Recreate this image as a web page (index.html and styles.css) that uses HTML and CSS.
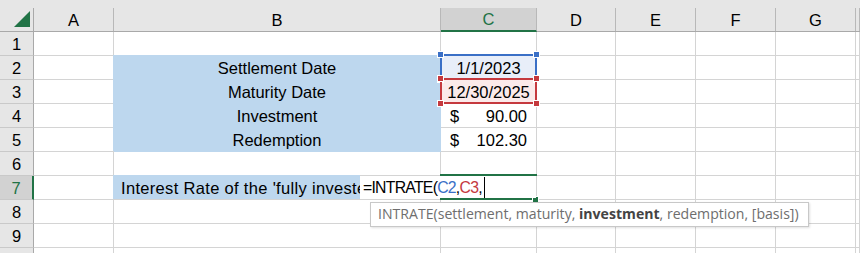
FILE: index.html
```html
<!DOCTYPE html>
<html>
<head>
<meta charset="utf-8">
<link rel="stylesheet" href="styles.css">
</head>
<body>
<div class="sheet">
  <div class="row head">
    <div class="hc w0 corner"><span class="lbl"><svg width="33" height="23" viewBox="0 8 33 23"><polygon points="14,27 30,27 30,11" fill="#217346"/></svg></span></div>
    <div class="hc wa"><span class="lbl">A</span></div>
    <div class="hc wb"><span class="lbl">B</span></div>
    <div class="hc wc sel"><span class="lbl">C</span></div>
    <div class="hc wd"><span class="lbl">D</span></div>
    <div class="hc we"><span class="lbl">E</span></div>
    <div class="hc wf"><span class="lbl">F</span></div>
    <div class="hc wg"><span class="lbl">G</span></div>
    <div class="hc wh"><span class="lbl"></span></div>
  </div>

  <div class="row">
    <div class="rh">1</div><div class="c wa"></div><div class="c wb"></div><div class="c wc"></div><div class="c wd"></div><div class="c we"></div><div class="c wf"></div><div class="c wg"></div><div class="c wh"></div>
  </div>
  <div class="row">
    <div class="rh">2</div><div class="c wa"></div><div class="c wb fill center">Settlement Date</div>
    <div class="c wc center ref ref-blue">1/1/2023<span class="box"><i class="h tl"></i><i class="h tr"></i><i class="h bl"></i><i class="h br"></i></span></div>
    <div class="c wd"></div><div class="c we"></div><div class="c wf"></div><div class="c wg"></div><div class="c wh"></div>
  </div>
  <div class="row">
    <div class="rh">3</div><div class="c wa"></div><div class="c wb fill center">Maturity Date</div>
    <div class="c wc center ref ref-red">12/30/2025<span class="box"><i class="h tl"></i><i class="h tr"></i><i class="h bl"></i><i class="h br"></i></span></div>
    <div class="c wd"></div><div class="c we"></div><div class="c wf"></div><div class="c wg"></div><div class="c wh"></div>
  </div>
  <div class="row">
    <div class="rh">4</div><div class="c wa"></div><div class="c wb fill center">Investment</div>
    <div class="c wc acct"><span>$</span><span>90.00</span></div>
    <div class="c wd"></div><div class="c we"></div><div class="c wf"></div><div class="c wg"></div><div class="c wh"></div>
  </div>
  <div class="row">
    <div class="rh">5</div><div class="c wa"></div><div class="c wb fill center">Redemption</div>
    <div class="c wc acct"><span>$</span><span>102.30</span></div>
    <div class="c wd"></div><div class="c we"></div><div class="c wf"></div><div class="c wg"></div><div class="c wh"></div>
  </div>
  <div class="row">
    <div class="rh">6</div><div class="c wa"></div><div class="c wb"></div><div class="c wc"></div><div class="c wd"></div><div class="c we"></div><div class="c wf"></div><div class="c wg"></div><div class="c wh"></div>
  </div>
  <div class="row r7">
    <div class="rh sel">7</div><div class="c wa"></div>
    <div class="c wb split"><div class="fill7">Interest Rate of the 'fully investe</div></div>
    <div class="c wc active"><span class="abox"><i class="fh"></i></span></div>
    <div class="c wd"></div><div class="c we"></div><div class="c wf"></div><div class="c wg"></div><div class="c wh"></div>
    <div class="editor">=INTRATE(<span class="rb">C2</span>,<span class="rr">C3</span>,<span class="caret"></span></div>
  </div>
  <div class="row">
    <div class="rh">8</div><div class="c wa"></div><div class="c wb"></div><div class="c wc"></div><div class="c wd"></div><div class="c we"></div><div class="c wf"></div><div class="c wg"></div><div class="c wh"></div>
  </div>
  <div class="row">
    <div class="rh">9</div><div class="c wa"></div><div class="c wb"></div><div class="c wc"></div><div class="c wd"></div><div class="c we"></div><div class="c wf"></div><div class="c wg"></div><div class="c wh"></div>
  </div>
  <div class="row">
    <div class="rh"></div><div class="c wa"></div><div class="c wb"></div><div class="c wc"></div><div class="c wd"></div><div class="c we"></div><div class="c wf"></div><div class="c wg"></div><div class="c wh"></div>
  </div>

  <div class="tip">INTRATE(settlement, maturity, <b>investment</b>, redemption, [basis])</div>
</div>
</body>
</html>
```

FILE: styles.css
```css
html, body {
  margin: 0;
  padding: 0;
  background: #fff;
}
.sheet {
  position: relative;
  width: 860px;
  height: 253px;
  overflow: hidden;
  font-family: "Liberation Sans", Arial, sans-serif;
  font-size: 16.5px;
  color: #000;
}
.row {
  display: flex;
  height: 24px;
}
.row.head {
  height: 32px;
  background: #e6e6e6;
}
.w0 { width: 34px; }
.wa { width: 80px; }
.wb { width: 327px; }
.wc { width: 96px; }
.wd { width: 79px; }
.we { width: 80px; }
.wf { width: 80px; }
.wg { width: 80px; }
.wh { flex: 1; }

/* column headers */
.hc {
  flex-shrink: 0;
  box-sizing: border-box;
  height: 32px;
  padding-top: 8px;
  border-bottom: 1px solid #a9a9a9;
}
.hc.wh { flex: 1; }
.hc .lbl {
  display: block;
  box-sizing: border-box;
  height: 23px;
  line-height: 24px;
  text-align: center;
  border-right: 1px solid #b8b8b8;
}
.corner .lbl {
  border-right-color: #a9a9a9;
}
.corner svg { display: block; }
.hc.sel {
  border-bottom: none;
}
.hc.sel .lbl {
  height: 24px;
  line-height: 23px;
  background: #d2d2d2;
  color: #217346;
  border-bottom: 2px solid #217346;
}

/* row headers */
.rh {
  flex-shrink: 0;
  box-sizing: border-box;
  width: 34px;
  height: 24px;
  line-height: 24px;
  text-align: center;
  background: #e6e6e6;
  border-right: 1px solid #a9a9a9;
  border-bottom: 1px solid #c9c9c9;
}
.rh.sel {
  background: #d2d2d2;
  color: #217346;
  border-right: 2px solid #217346;
}

/* cells */
.c {
  flex-shrink: 0;
  box-sizing: border-box;
  height: 24px;
  line-height: 24px;
  border-right: 1px solid #d4d4d4;
  border-bottom: 1px solid #d4d4d4;
  white-space: nowrap;
  position: relative;
}
.c.wh { flex: 1; }
.center { text-align: center; }
.fill {
  background: #bdd7ee;
  border-color: #bdd7ee;
  box-shadow: -1px -1px 0 0 #bdd7ee;
}
.acct {
  display: flex;
  justify-content: space-between;
  padding: 0 9px 0 9px;
}
.split {
  display: flex;
}
.fill7 {
  width: 247px;
  margin-left: -1px;
  padding-left: 8px;
  box-sizing: border-box;
  height: 24px;
  margin-top: -1px;
  line-height: 25px;
  padding-top: 1px;
  background: #bdd7ee;
  overflow: hidden;
  letter-spacing: 0.32px;
}

/* range reference highlights */
.ref-blue { background: #e8eef9; }
.ref-red { background: #fbeaea; }
.box {
  position: absolute;
  left: -1px;
  top: -2px;
  width: 97px;
  height: 26px;
  box-sizing: border-box;
  border: 2px solid #3a6fc6;
  z-index: 2;
}
.ref-red .box { border-color: #c5393e; z-index: 3; }
.h {
  position: absolute;
  width: 5px;
  height: 5px;
  background: #3a6fc6;
  box-shadow: 0 0 0 1px #fff;
}
.ref-red .h { background: #c5393e; }
.h.tl { left: -4px; top: -4px; }
.h.tr { right: -4px; top: -4px; }
.h.bl { left: -4px; bottom: -4px; }
.h.br { right: -4px; bottom: -4px; }

/* active cell */
.abox {
  position: absolute;
  left: -1px;
  top: -2px;
  width: 97px;
  height: 26px;
  box-sizing: border-box;
  border-top: 2px solid #217346;
  border-bottom: 2px solid #217346;
  z-index: 2;
}
.fh {
  position: absolute;
  right: -1px;
  bottom: -4px;
  width: 5px;
  height: 5px;
  background: #217346;
  box-shadow: 0 0 0 1px #fff;
}
.r7 { position: relative; }
.editor {
  position: absolute;
  left: 361px;
  top: 0;
  width: 175px;
  height: 22px;
  line-height: 24px;
  padding-left: 2px;
  box-sizing: border-box;
  background: #fff;
  white-space: nowrap;
  font-size: 15.8px;
  letter-spacing: -0.75px;
  z-index: 4;
}
.rb { color: #3a6fc6; }
.rr { color: #c5393e; }
.caret {
  display: inline-block;
  width: 1px;
  height: 21px;
  background: #000;
  vertical-align: -5px;
  margin-left: 2px;
}

/* tooltip */
.tip {
  position: absolute;
  left: 370px;
  top: 202px;
  width: 439px;
  height: 25px;
  box-sizing: border-box;
  background: #fff;
  border: 1px solid #c8c8c8;
  box-shadow: 1px 1px 2px rgba(0,0,0,0.12);
  font-family: "Open Sans", "Noto Sans", sans-serif;
  font-size: 14.1px;
  line-height: 22px;
  padding-left: 7px;
  color: #6e6e6e;
  white-space: nowrap;
  z-index: 5;
}
.tip b {
  color: #444;
  font-weight: 700;
}
```
